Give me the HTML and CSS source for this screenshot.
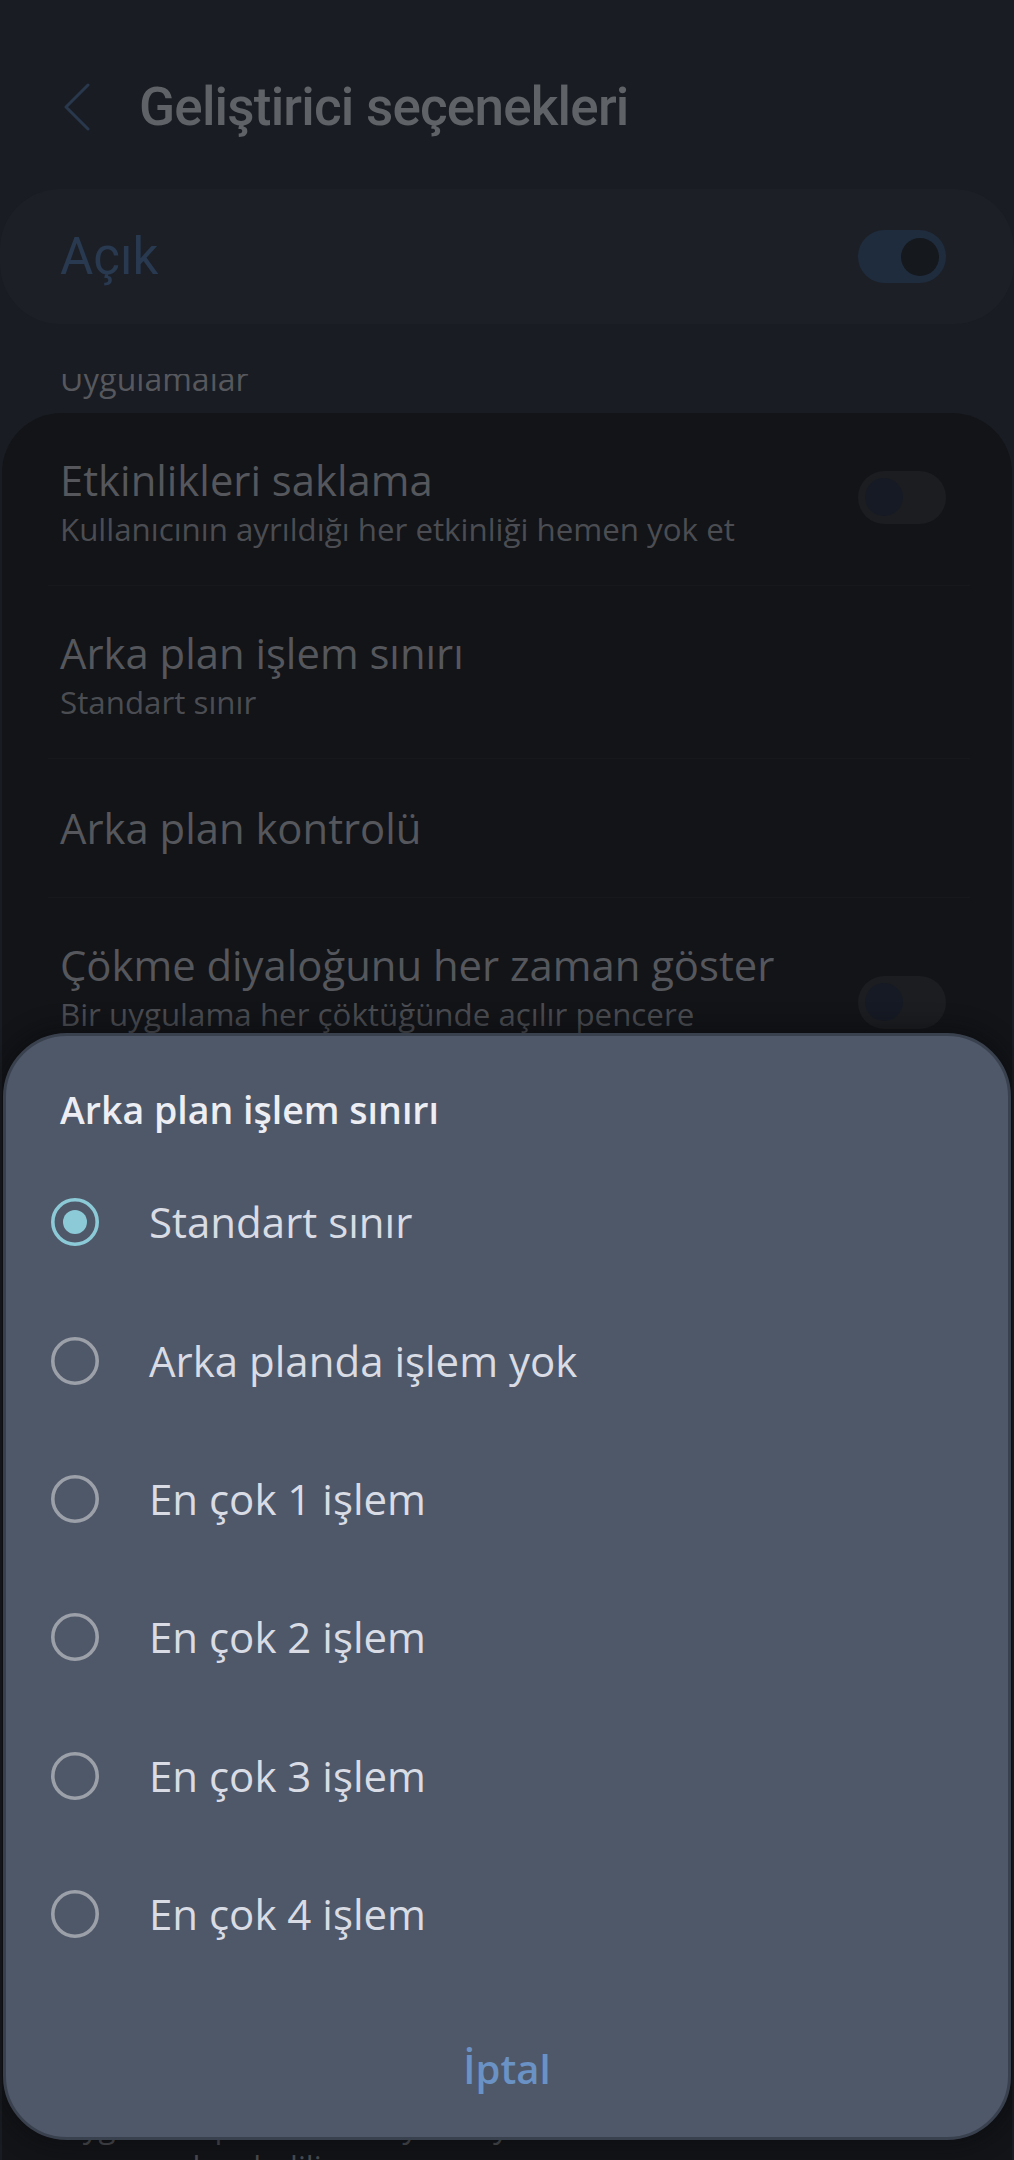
FILE: index.html
```html
<!DOCTYPE html>
<html lang="tr">
<head>
<meta charset="utf-8">
<title>Geliştirici seçenekleri</title>
<link rel="stylesheet" href="styles.css">
</head>
<body>
<div class="screen">
  <header class="appbar">
    <span class="back">
      <svg width="26" height="48" viewBox="0 0 26 48"><polyline points="24,2 2,24 24,46" fill="none" stroke="#2a384e" stroke-width="3" stroke-linecap="round" stroke-linejoin="round"/></svg>
    </span>
    <h1 class="title">Geliştirici seçenekleri</h1>
  </header>

  <section class="master">
    <span class="master-label">Açık</span>
    <span class="switch switch-on"><span class="knob"></span></span>
  </section>

  <div class="scroll">
    <div class="prev-sub">Uygulamalar</div>
    <div class="group">
      <div class="item">
        <div class="item-text">
          <div class="item-title">Etkinlikleri saklama</div>
          <div class="item-sub">Kullanıcının ayrıldığı her etkinliği hemen yok et</div>
        </div>
        <span class="switch switch-off"><span class="knob"></span></span>
      </div>
      <div class="divider"></div>
      <div class="item">
        <div class="item-text">
          <div class="item-title">Arka plan işlem sınırı</div>
          <div class="item-sub">Standart sınır</div>
        </div>
      </div>
      <div class="divider"></div>
      <div class="item item-single">
        <div class="item-text">
          <div class="item-title">Arka plan kontrolü</div>
        </div>
      </div>
      <div class="divider"></div>
      <div class="item">
        <div class="item-text">
          <div class="item-title">Çökme diyaloğunu her zaman göster</div>
          <div class="item-sub">Bir uygulama her çöktüğünde açılır pencere göster</div>
        </div>
        <span class="switch switch-off"><span class="knob"></span></span>
      </div>
      <div class="divider"></div>
      <div class="item">
        <div class="item-text">
          <div class="item-title">Yanıt vermeyen uygulamalar</div>
          <div class="item-sub">Arka plan uygulamaları için Uygulama yanıt vermiyor iletişim kutusunu göster</div>
        </div>
        <span class="switch switch-off"><span class="knob"></span></span>
      </div>
      <div class="divider"></div>
      <div class="item">
        <div class="item-text">
          <div class="item-title">Bildirim kanalı uyarıları</div>
          <div class="item-sub">Uygulama geçerli bir kanal olmadan bildirim yayınladığında uyarı gösterir</div>
        </div>
        <span class="switch switch-off"><span class="knob"></span></span>
      </div>
      <div class="divider"></div>
      <div class="item">
        <div class="item-text">
          <div class="item-title">Harici birim uygulamaları</div>
          <div class="item-sub">Manifest değerlerinden bağımsız olarak uygulamaları harici depolamaya yazdırır</div>
        </div>
        <span class="switch switch-off"><span class="knob"></span></span>
      </div>
      <div class="divider"></div>
      <div class="item">
        <div class="item-text">
          <div class="item-title">Boyutlandırmaya zorla</div>
          <div class="item-sub">Tüm etkinlikleri çoklu pencere için yeniden boyutlandırılabilir yap</div>
        </div>
        <span class="switch switch-off"><span class="knob"></span></span>
      </div>
      <div class="divider"></div>
      <div class="item item-late">
        <div class="item-text">
          <div class="item-title">Serbest biçimli pencereler</div>
          <div class="item-sub">Deneysel serbest biçimli pencere desteğini aç.<br>Uygulama penceresi boyutu ayarlanır ve<br>ve sonra kaydedilir</div>
        </div>
        <span class="switch switch-off"><span class="knob"></span></span>
      </div>
    </div>
  </div>

  <div class="dialog" role="dialog" aria-label="Arka plan işlem sınırı">
    <div class="dialog-title">Arka plan işlem sınırı</div>
    <ul class="options">
      <li class="option">
        <svg class="radio" width="48" height="48" viewBox="0 0 48 48"><circle cx="24" cy="24" r="22.2" fill="none" stroke="#8ccad8" stroke-width="3.6"/><circle cx="24" cy="24" r="12" fill="#8ccad8"/></svg>
        <span class="option-label">Standart sınır</span>
      </li>
      <li class="option">
        <svg class="radio" width="48" height="48" viewBox="0 0 48 48"><circle cx="24" cy="24" r="22.2" fill="none" stroke="#9ca0a8" stroke-width="3.6"/></svg>
        <span class="option-label">Arka planda işlem yok</span>
      </li>
      <li class="option">
        <svg class="radio" width="48" height="48" viewBox="0 0 48 48"><circle cx="24" cy="24" r="22.2" fill="none" stroke="#9ca0a8" stroke-width="3.6"/></svg>
        <span class="option-label">En çok 1 işlem</span>
      </li>
      <li class="option">
        <svg class="radio" width="48" height="48" viewBox="0 0 48 48"><circle cx="24" cy="24" r="22.2" fill="none" stroke="#9ca0a8" stroke-width="3.6"/></svg>
        <span class="option-label">En çok 2 işlem</span>
      </li>
      <li class="option">
        <svg class="radio" width="48" height="48" viewBox="0 0 48 48"><circle cx="24" cy="24" r="22.2" fill="none" stroke="#9ca0a8" stroke-width="3.6"/></svg>
        <span class="option-label">En çok 3 işlem</span>
      </li>
      <li class="option">
        <svg class="radio" width="48" height="48" viewBox="0 0 48 48"><circle cx="24" cy="24" r="22.2" fill="none" stroke="#9ca0a8" stroke-width="3.6"/></svg>
        <span class="option-label">En çok 4 işlem</span>
      </li>
    </ul>
    <div class="dialog-actions">
      <span class="btn-cancel">İptal</span>
    </div>
  </div>
</div>
</body>
</html>
```

FILE: styles.css
```css
* { box-sizing: border-box; }

html, body {
  margin: 0;
  padding: 0;
  background: #191c22;
}

.screen {
  position: relative;
  width: 1014px;
  height: 2160px;
  overflow: hidden;
  display: flex;
  flex-direction: column;
  background: #191c22;
  font-family: "Open Sans", "Noto Sans", sans-serif;
}

/* App bar */
.appbar {
  display: flex;
  align-items: center;
  height: 150px;
  margin-top: 32px;
  flex: none;
}

.back {
  display: flex;
  margin-left: 64px;
}

.title {
  margin: 0 0 0 49px;
  font-family: Roboto, "Noto Sans", sans-serif;
  font-weight: 500;
  font-size: 53px;
  letter-spacing: -0.8px;
  color: #5f6267;
  line-height: 60px;
}

/* Master switch card */
.master {
  flex: none;
  margin-top: 7px;
  height: 135px;
  border-radius: 60px;
  background: #1c1f26;
  display: flex;
  align-items: center;
  justify-content: space-between;
  padding: 0 68px 0 60px;
}

.master-label {
  font-family: Roboto, "Noto Sans", sans-serif;
  font-size: 51px;
  color: #283950;
}

/* Switches */
.switch {
  flex: none;
  width: 88px;
  height: 53px;
  border-radius: 27px;
  display: flex;
  align-items: center;
  padding: 0 7px;
}

.switch .knob {
  width: 38px;
  height: 38px;
  border-radius: 50%;
}

.switch-on {
  background: #1f2c3d;
  justify-content: flex-end;
}

.switch-on .knob {
  background: #15181d;
}

.switch-off {
  background: #1c1d21;
  justify-content: flex-start;
}

.switch-off .knob {
  background: #161a24;
}

.item .switch {
  margin-bottom: 10px;
}

/* Scrolling list */
.scroll {
  flex: 1;
  margin-top: 50px;
  overflow: hidden;
}

.prev-sub {
  margin-top: -15px;
  padding-left: 60px;
  font-size: 32px;
  line-height: 40px;
  color: #56585d;
}

.group {
  margin: 14px 2px 0;
  background: #121418;
  border-radius: 60px 60px 0 0;
}

.item {
  display: flex;
  align-items: center;
  justify-content: space-between;
  padding: 42px 66px 36px 58px;
}

.item-single {
  padding-top: 44px;
  padding-bottom: 44px;
}

.item-late {
  padding-top: 49px;
}

.item-text {
  flex: 0 1 700px;
}

.item-title {
  font-size: 41.8px;
  line-height: 50px;
  color: #55575c;
  white-space: nowrap;
}

.item-sub {
  margin-top: 4px;
  font-size: 31.3px;
  line-height: 40px;
  color: #4b4d52;
}

.divider {
  height: 1px;
  margin: 0 42px 0 46px;
  background: #16181c;
}

/* Dialog */
.dialog {
  position: absolute;
  left: 3px;
  top: 1033px;
  width: 1008px;
  height: 1107px;
  border: 3px solid #3a414e;
  border-radius: 64px;
  background: #4f5869;
  box-shadow: 0 0 22px 6px rgba(8, 9, 12, 0.45);
  padding-top: 49px;
  display: flex;
  flex-direction: column;
}

.dialog-title {
  padding-left: 54px;
  font-size: 37.5px;
  font-weight: 600;
  line-height: 50px;
  color: #eceef4;
}

.options {
  list-style: none;
  margin: 18px 0 0;
  padding: 0;
}

.option {
  display: flex;
  align-items: center;
  height: 138.4px;
  padding-left: 45px;
}

.radio {
  flex: none;
  display: block;
}

.option-label {
  margin-left: 50px;
  font-size: 42px;
  line-height: 50px;
  color: #d9dce4;
}

.dialog-actions {
  margin-top: 61px;
  display: flex;
  justify-content: center;
}

.btn-cancel {
  font-size: 40px;
  font-weight: 600;
  line-height: 50px;
  color: #6a92c5;
}
```
